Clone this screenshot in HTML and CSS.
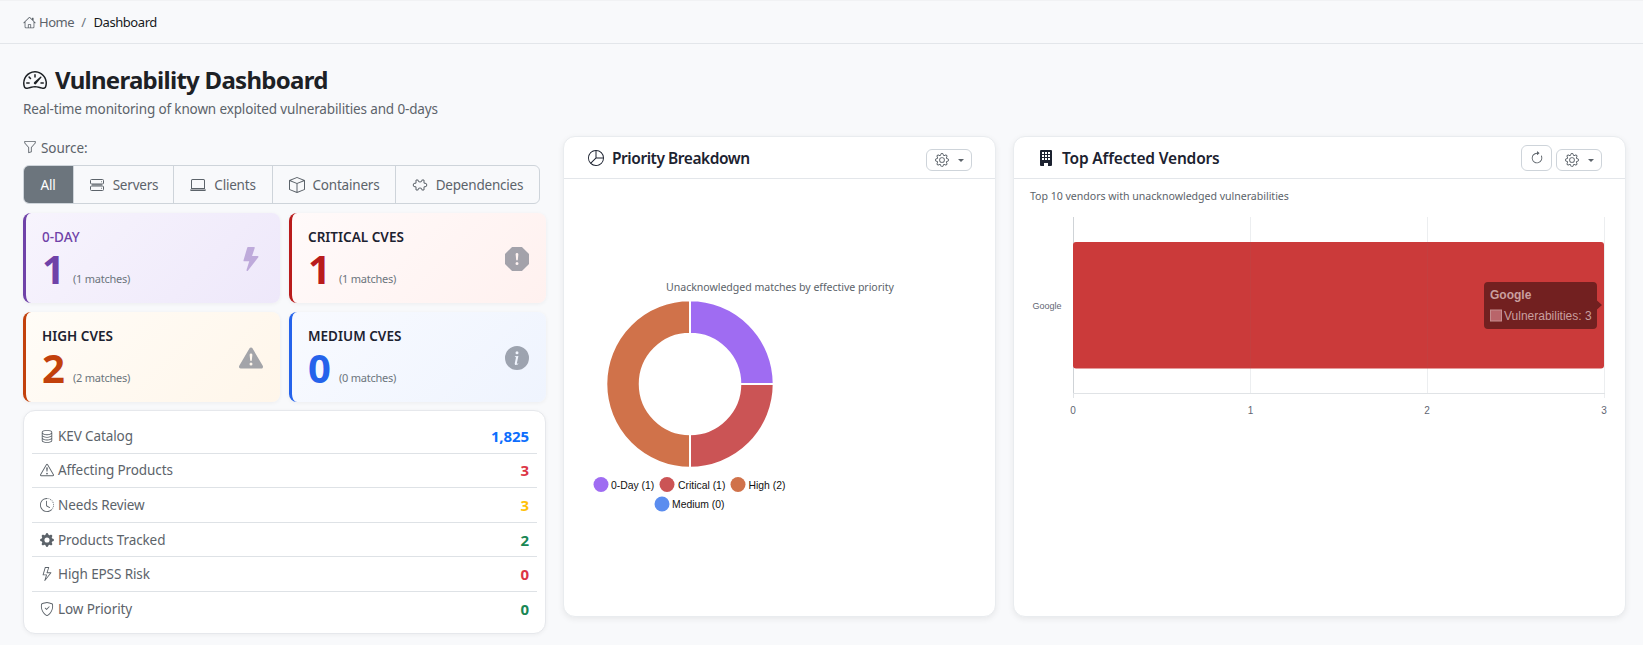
FILE: index.html
```html
<!DOCTYPE html>
<html lang="en">
<head>
<meta charset="utf-8">
<title>Vulnerability Dashboard</title>
<link rel="stylesheet" href="styles.css">
</head>
<body>
<svg class="sprite" width="0" height="0" aria-hidden="true">
  <symbol id="i-house" viewBox="0 0 16 16"><path d="M8.707 1.5a1 1 0 0 0-1.414 0L.646 8.146a.5.5 0 0 0 .708.708L2 8.207V13.5A1.5 1.5 0 0 0 3.5 15h9a1.5 1.5 0 0 0 1.5-1.5V8.207l.646.647a.5.5 0 0 0 .708-.708L13 5.793V2.5a.5.5 0 0 0-.5-.5h-1a.5.5 0 0 0-.5.5v1.293zM13 7.207V13.5a.5.5 0 0 1-.5.5H10v-3.5a.5.5 0 0 0-.5-.5h-3a.5.5 0 0 0-.5.5V14H3.500a.5.5 0 0 1-.5-.5V7.207l5-5zM7 14v-3h2v3z"/></symbol>
  <symbol id="i-speed" viewBox="0 0 16 16"><path d="M8 4a.5.5 0 0 1 .5.5V6a.5.5 0 0 1-1 0V4.500A.5.5 0 0 1 8 4M3.732 5.732a.5.5 0 0 1 .707 0l.915.914a.5.5 0 1 1-.708.708l-.914-.915a.5.5 0 0 1 0-.707M2 10a.5.5 0 0 1 .5-.5h1.586a.5.5 0 0 1 0 1H2.500A.5.5 0 0 1 2 10m9.500 0a.5.5 0 0 1 .5-.5h1.500a.5.5 0 0 1 0 1H12a.5.5 0 0 1-.5-.5m.754-4.246a.39.39 0 0 0-.527-.02L7.547 9.310a.91.91 0 1 0 1.302 1.258l3.434-4.297a.39.39 0 0 0-.029-.518z"/><path fill-rule="evenodd" d="M0 10a8 8 0 1 1 15.547 2.661c-.442 1.253-1.845 1.602-2.932 1.250C11.309 13.488 9.475 13 8 13c-1.474 0-3.310.488-4.615.911-1.087.352-2.490.003-2.932-1.250A8 8 0 0 1 0 10m8-7a7 7 0 0 0-6.603 9.329c.203.575.923.876 1.680.630C4.397 12.533 6.358 12 8 12s3.604.532 4.923.960c.757.245 1.477-.056 1.680-.631A7 7 0 0 0 8 3"/></symbol>
  <symbol id="i-funnel" viewBox="0 0 16 16"><path d="M1.500 1.500A.5.5 0 0 1 2 1h12a.5.5 0 0 1 .5.5v2a.5.5 0 0 1-.128.334L10 8.692V13.500a.5.5 0 0 1-.342.474l-3 1A.5.5 0 0 1 6 14.500V8.692L1.628 3.834A.5.5 0 0 1 1.500 3.500zm1 .5v1.308l4.372 4.858A.5.5 0 0 1 7 8.500v5.306l2-.666V8.500a.5.5 0 0 1 .128-.334L13.500 3.308V2z"/></symbol>
  <symbol id="i-servers" viewBox="0 0 16 16"><g fill="none" stroke="currentColor"><rect x="1.500" y="2.500" width="13" height="4.500" rx="1"/><rect x="1.500" y="9" width="13" height="4.500" rx="1"/><path d="M3 7.900h10M12 4.750h.8M12 11.250h.8"/></g></symbol>
  <symbol id="i-laptop" viewBox="0 0 16 16"><path d="M13.500 3a.5.5 0 0 1 .5.5V11H2V3.500a.5.5 0 0 1 .5-.5zm-11-1A1.500 1.500 0 0 0 1 3.500V12h14V3.500A1.500 1.500 0 0 0 13.500 2zM0 12.500h16a1.500 1.500 0 0 1-1.500 1.500h-13A1.500 1.500 0 0 1 0 12.500"/></symbol>
  <symbol id="i-box" viewBox="0 0 16 16"><path d="M8.186 1.113a.5.5 0 0 0-.372 0L1.846 3.500 8 5.961 14.154 3.500zM15 4.239l-6.500 2.600v7.922l6.500-2.600V4.240zM7.500 14.762V6.838L1 4.239v7.925zM7.443.184a1.500 1.500 0 0 1 1.114 0l7.129 2.852A.5.5 0 0 1 16 3.500v8.662a1 1 0 0 1-.629.928l-7.185 2.874a.5.5 0 0 1-.372 0L.63 13.090a1 1 0 0 1-.63-.928V3.500a.5.5 0 0 1 .314-.464z"/></symbol>
  <symbol id="i-puzzle" viewBox="0 0 16 16"><path fill="none" stroke="currentColor" d="M4 3h2.200v.8a1.800 1.200 0 0 0 3.600 0V3H12v3.200h1a1.800 1.800 0 0 1 0 3.600h-1V13H9.800v-.8a1.800 1.200 0 0 0-3.600 0v.8H4V9.800H3a1.800 1.800 0 0 1 0-3.600h1z"/></symbol>
  <symbol id="i-bolt-fill" viewBox="0 0 16 16"><path d="M5.520.359A.5.5 0 0 1 6 0h4a.5.5 0 0 1 .474.658L8.694 6H12.500a.5.5 0 0 1 .395.807l-7 9a.5.5 0 0 1-.873-.454L6.823 9.500H3.500a.5.5 0 0 1-.48-.641z"/></symbol>
  <symbol id="i-octagon" viewBox="0 0 16 16"><path d="M11.460.146A.5.5 0 0 0 11.107 0H4.893a.5.5 0 0 0-.353.146L.146 4.540A.5.5 0 0 0 0 4.893v6.214a.5.5 0 0 0 .146.353l4.394 4.394a.5.5 0 0 0 .353.146h6.214a.5.5 0 0 0 .353-.146l4.394-4.394a.5.5 0 0 0 .146-.353V4.893a.5.5 0 0 0-.146-.353zM8 4c.535 0 .954.462.9.995l-.35 3.507a.552.552 0 0 1-1.100 0L7.100 4.995A.905.905 0 0 1 8 4m.002 6a1 1 0 1 1 0 2 1 1 0 0 1 0-2"/></symbol>
  <symbol id="i-tri-fill" viewBox="0 0 16 16"><path d="M8.982 1.566a1.130 1.130 0 0 0-1.960 0L.165 13.233c-.457.778.091 1.767.98 1.767h13.713c.889 0 1.438-.99.98-1.767zM8 5c.535 0 .954.462.9.995l-.35 3.507a.552.552 0 0 1-1.100 0L7.100 5.995A.905.905 0 0 1 8 5m.002 6a1 1 0 1 1 0 2 1 1 0 0 1 0-2"/></symbol>
  <symbol id="i-info" viewBox="0 0 16 16"><path d="M8 16A8 8 0 1 0 8 0a8 8 0 0 0 0 16m.93-9.412-1 4.705c-.07.34.029.533.304.533.194 0 .487-.07.686-.246l-.088.416c-.287.346-.92.598-1.465.598-.703 0-1.002-.422-.808-1.319l.738-3.468c.064-.293.006-.399-.287-.47l-.451-.081.082-.381 2.290-.287zM8 5.500a1 1 0 1 1 0-2 1 1 0 0 1 0 2"/></symbol>
  <symbol id="i-db" viewBox="0 0 16 16"><path d="M4.318 2.687C5.234 2.271 6.536 2 8 2s2.766.27 3.682.687C12.644 3.125 13 3.627 13 4c0 .374-.356.875-1.318 1.313C10.766 5.729 9.464 6 8 6s-2.766-.27-3.682-.687C3.356 4.875 3 4.373 3 4c0-.374.356-.875 1.318-1.313M13 5.698V7c0 .374-.356.875-1.318 1.313C10.766 8.729 9.464 9 8 9s-2.766-.27-3.682-.687C3.356 7.875 3 7.373 3 7V5.698c.271.202.58.378.904.525C4.978 6.711 6.427 7 8 7s3.022-.289 4.096-.777A5 5 0 0 0 13 5.698M14 4c0-1.007-.875-1.755-1.904-2.223C11.022 1.289 9.573 1 8 1s-3.022.289-4.096.777C2.875 2.245 2 2.993 2 4v9c0 1.007.875 1.755 1.904 2.223C4.978 15.710 6.427 16 8 16s3.022-.289 4.096-.777C13.125 14.755 14 14.007 14 13zm-1 4.698V10c0 .374-.356.875-1.318 1.313C10.766 11.729 9.464 12 8 12s-2.766-.27-3.682-.687C3.356 10.875 3 10.373 3 10V8.698c.271.202.58.378.904.525C4.978 9.710 6.427 10 8 10s3.022-.289 4.096-.777A5 5 0 0 0 13 8.698m0 3V13c0 .374-.356.875-1.318 1.313C10.766 14.729 9.464 15 8 15s-2.766-.27-3.682-.687C3.356 13.875 3 13.373 3 13v-1.302c.271.202.58.378.904.525C4.978 12.710 6.427 13 8 13s3.022-.289 4.096-.777c.324-.147.633-.323.904-.525"/></symbol>
  <symbol id="i-tri" viewBox="0 0 16 16"><path d="M7.938 2.016A.13.13 0 0 1 8.002 2a.13.13 0 0 1 .063.016.15.15 0 0 1 .054.057l6.857 11.667c.036.06.035.124.002.183a.2.2 0 0 1-.054.06.1.1 0 0 1-.066.017H1.146a.1.1 0 0 1-.066-.017.2.2 0 0 1-.054-.06.18.18 0 0 1 .002-.183L7.884 2.073a.15.15 0 0 1 .054-.057m1.044-.45a1.130 1.130 0 0 0-1.960 0L.165 13.233c-.457.778.091 1.767.98 1.767h13.713c.889 0 1.438-.99.98-1.767z"/><path d="M7.002 12a1 1 0 1 1 2 0 1 1 0 0 1-2 0M7.100 5.995a.905.905 0 1 1 1.800 0l-.35 3.507a.552.552 0 0 1-1.100 0z"/></symbol>
  <symbol id="i-clock" viewBox="0 0 16 16"><path d="M8.515 1.019A7 7 0 0 0 8 1V0a8 8 0 0 1 .589.022zm2.004.45a7 7 0 0 0-.985-.299l.219-.976q.576.129 1.126.342zm1.370.71a7 7 0 0 0-.439-.27l.493-.87a8 8 0 0 1 .979.654l-.615.789a7 7 0 0 0-.418-.302zm1.834 1.790a7 7 0 0 0-.653-.796l.724-.69q.406.429.747.91zm.744 1.352a7 7 0 0 0-.214-.468l.893-.45a8 8 0 0 1 .45 1.088l-.95.313a7 7 0 0 0-.179-.483m.53 2.507a7 7 0 0 0-.1-1.025l.985-.17q.1.580.116 1.170zm-.131 1.538q.05-.254.081-.51l.993.123a8 8 0 0 1-.23 1.155l-.964-.267q.069-.247.120-.501m-.952 2.379q.276-.436.486-.908l.914.405q-.24.540-.555 1.038zm-.964 1.205q.183-.183.350-.378l.758.653a8 8 0 0 1-.401.432z"/><path d="M8 1a7 7 0 1 0 4.950 11.950l.707.707A8.001 8.001 0 1 1 8 0z"/><path d="M7.500 3a.5.5 0 0 1 .5.5v5.210l3.248 1.856a.5.5 0 0 1-.496.868l-3.500-2A.5.5 0 0 1 7 9V3.500a.5.5 0 0 1 .5-.5"/></symbol>
  <symbol id="i-gear-fill" viewBox="0 0 16 16"><path d="M9.405 1.050c-.413-1.400-2.397-1.400-2.810 0l-.1.34a1.464 1.464 0 0 1-2.105.872l-.31-.17c-1.283-.698-2.686.705-1.987 1.987l.169.311c.446.82.023 1.841-.872 2.105l-.34.1c-1.400.413-1.400 2.397 0 2.810l.34.1a1.464 1.464 0 0 1 .872 2.105l-.17.31c-.698 1.283.705 2.686 1.987 1.987l.311-.169a1.464 1.464 0 0 1 2.105.872l.1.34c.413 1.400 2.397 1.400 2.810 0l.1-.34a1.464 1.464 0 0 1 2.105-.872l.31.17c1.283.698 2.686-.705 1.987-1.987l-.169-.311a1.464 1.464 0 0 1 .872-2.105l.34-.1c1.400-.413 1.400-2.397 0-2.810l-.34-.1a1.464 1.464 0 0 1-.872-2.105l.17-.31c.698-1.283-.705-2.686-1.987-1.987l-.311.169a1.464 1.464 0 0 1-2.105-.872zM8 10.930a2.929 2.929 0 1 1 0-5.860 2.929 2.929 0 0 1 0 5.858z"/></symbol>
  <symbol id="i-gear" viewBox="0 0 16 16"><path d="M8 4.754a3.246 3.246 0 1 0 0 6.492 3.246 3.246 0 0 0 0-6.492M5.754 8a2.246 2.246 0 1 1 4.492 0 2.246 2.246 0 0 1-4.492 0"/><path d="M9.796 1.343c-.527-1.790-3.065-1.790-3.592 0l-.094.319a.873.873 0 0 1-1.255.52l-.292-.16c-1.640-.892-3.433.902-2.540 2.541l.159.292a.873.873 0 0 1-.52 1.255l-.319.094c-1.790.527-1.790 3.065 0 3.592l.319.094a.873.873 0 0 1 .52 1.255l-.16.292c-.892 1.640.901 3.434 2.541 2.540l.292-.159a.873.873 0 0 1 1.255.52l.094.319c.527 1.790 3.065 1.790 3.592 0l.094-.319a.873.873 0 0 1 1.255-.52l.292.16c1.640.893 3.434-.902 2.540-2.541l-.159-.292a.873.873 0 0 1 .52-1.255l.319-.094c1.790-.527 1.790-3.065 0-3.592l-.319-.094a.873.873 0 0 1-.52-1.255l.16-.292c.893-1.640-.902-3.433-2.541-2.540l-.292.159a.873.873 0 0 1-1.255-.52zm-2.633.283c.246-.835 1.428-.835 1.674 0l.094.319a1.873 1.873 0 0 0 2.693 1.115l.291-.16c.764-.415 1.600.42 1.184 1.185l-.159.292a1.873 1.873 0 0 0 1.116 2.692l.318.094c.835.246.835 1.428 0 1.674l-.319.094a1.873 1.873 0 0 0-1.115 2.693l.16.291c.415.764-.42 1.600-1.185 1.184l-.291-.159a1.873 1.873 0 0 0-2.693 1.116l-.094.318c-.246.835-1.428.835-1.674 0l-.094-.319a1.873 1.873 0 0 0-2.692-1.115l-.292.16c-.764.415-1.600-.42-1.184-1.185l.159-.291A1.873 1.873 0 0 0 1.945 8.930l-.319-.094c-.835-.246-.835-1.428 0-1.674l.319-.094A1.873 1.873 0 0 0 3.060 4.377l-.16-.292c-.415-.764.42-1.600 1.185-1.184l.292.159a1.873 1.873 0 0 0 2.692-1.115z"/></symbol>
  <symbol id="i-bolt" viewBox="0 0 16 16"><path d="M5.520.359A.5.5 0 0 1 6 0h4a.5.5 0 0 1 .474.658L8.694 6H12.500a.5.5 0 0 1 .395.807l-7 9a.5.5 0 0 1-.873-.454L6.823 9.500H3.500a.5.5 0 0 1-.48-.641zM6.374 1 4.168 8.500H7.500a.5.5 0 0 1 .478.647L6.780 13.040 11.478 7H8a.5.5 0 0 1-.474-.658L9.306 1z"/></symbol>
  <symbol id="i-shield" viewBox="0 0 16 16"><path d="M5.338 1.590a61 61 0 0 0-2.837.856.48.48 0 0 0-.328.39c-.554 4.157.726 7.190 2.253 9.188a10.700 10.700 0 0 0 2.287 2.233c.346.244.652.42.893.533q.18.085.293.118a1 1 0 0 0 .101.025 1 1 0 0 0 .1-.025q.114-.034.294-.118c.24-.113.547-.29.893-.533a10.700 10.700 0 0 0 2.287-2.233c1.527-1.997 2.807-5.031 2.253-9.188a.48.48 0 0 0-.328-.39c-.651-.213-1.750-.56-2.837-.855C9.552 1.290 8.531 1.067 8 1.067c-.53 0-1.552.223-2.662.524zM5.072.56C6.157.265 7.310 0 8 0s1.843.265 2.928.56c1.110.3 2.229.655 2.887.87a1.540 1.540 0 0 1 1.044 1.262c.596 4.477-.787 7.795-2.465 9.990a11.800 11.800 0 0 1-2.517 2.453 7 7 0 0 1-1.048.625c-.28.132-.581.24-.829.24s-.548-.108-.829-.24a7 7 0 0 1-1.048-.625 11.800 11.800 0 0 1-2.517-2.453C1.928 10.487.545 7.169 1.141 2.692A1.540 1.540 0 0 1 2.185 1.430 63 63 0 0 1 5.072.56"/><path d="M10.854 5.146a.5.5 0 0 1 0 .708l-3 3a.5.5 0 0 1-.708 0l-1.500-1.500a.5.5 0 1 1 .708-.708L7.500 7.793l2.646-2.647a.5.5 0 0 1 .708 0"/></symbol>
  <symbol id="i-pie" viewBox="0 0 16 16"><path d="M7.500 1.018a7 7 0 0 0-4.790 11.566L7.500 7.793zm1 0V7.500h6.482A7 7 0 0 0 8.500 1.018M14.982 8.500H8.207l-4.790 4.790A7 7 0 0 0 14.982 8.500M0 8a8 8 0 1 1 16 0A8 8 0 0 1 0 8"/></symbol>
  <symbol id="i-building" viewBox="0 0 16 16"><path fill-rule="evenodd" d="M3 0a1 1 0 0 0-1 1v14a1 1 0 0 0 1 1h3v-3h4v3h3a1 1 0 0 0 1-1V1a1 1 0 0 0-1-1zm1 2h2v2H4zm3 0h2v2H7zm3 0h2v2h-2zM4 5h2v2H4zm3 0h2v2H7zm3 0h2v2h-2zM4 8h2v2H4zm3 0h2v2H7zm3 0h2v2h-2z"/></symbol>
  <symbol id="i-refresh" viewBox="0 0 16 16"><path d="M8 3a5 5 0 1 0 4.546 2.914.5.5 0 0 1 .908-.417A6 6 0 1 1 8 2z"/><path d="M8 4.466V.534a.25.25 0 0 1 .41-.192l2.360 1.966c.12.1.12.284 0 .384L8.410 4.658A.25.25 0 0 1 8 4.466"/></symbol>
</svg>

<nav class="crumbs">
  <a class="crumb-link"><svg class="ico ico-13"><use href="#i-house"/></svg>Home</a>
  <span class="crumb-sep">/</span>
  <span class="crumb-now">Dashboard</span>
</nav>

<main class="page">
  <header class="page-head">
    <h1 class="page-title"><svg class="ico ico-24"><use href="#i-speed"/></svg>Vulnerability Dashboard</h1>
    <p class="page-sub">Real-time monitoring of known exploited vulnerabilities and 0-days</p>
  </header>

  <div class="columns">
    <section class="left">
      <div class="source-label"><svg class="ico ico-14"><use href="#i-funnel"/></svg>Source:</div>
      <div class="btn-group">
        <button class="seg seg-active seg-all">All</button>
        <button class="seg seg-servers"><svg class="ico ico-16"><use href="#i-servers"/></svg>Servers</button>
        <button class="seg seg-clients"><svg class="ico ico-16"><use href="#i-laptop"/></svg>Clients</button>
        <button class="seg seg-containers"><svg class="ico ico-16"><use href="#i-box"/></svg>Containers</button>
        <button class="seg seg-deps"><svg class="ico ico-16"><use href="#i-puzzle"/></svg>Dependencies</button>
      </div>

      <div class="cards">
        <article class="card card-zero">
          <div class="card-text">
            <h3 class="card-label">0-DAY</h3>
            <div class="card-value"><span class="card-num">1</span><span class="card-match">(1 matches)</span></div>
          </div>
          <svg class="card-ico"><use href="#i-bolt-fill"/></svg>
        </article>
        <article class="card card-crit">
          <div class="card-text">
            <h3 class="card-label">CRITICAL CVES</h3>
            <div class="card-value"><span class="card-num">1</span><span class="card-match">(1 matches)</span></div>
          </div>
          <svg class="card-ico"><use href="#i-octagon"/></svg>
        </article>
        <article class="card card-high">
          <div class="card-text">
            <h3 class="card-label">HIGH CVES</h3>
            <div class="card-value"><span class="card-num">2</span><span class="card-match">(2 matches)</span></div>
          </div>
          <svg class="card-ico"><use href="#i-tri-fill"/></svg>
        </article>
        <article class="card card-med">
          <div class="card-text">
            <h3 class="card-label">MEDIUM CVES</h3>
            <div class="card-value"><span class="card-num">0</span><span class="card-match">(0 matches)</span></div>
          </div>
          <svg class="card-ico"><use href="#i-info"/></svg>
        </article>
      </div>

      <ul class="stats">
        <li class="stat"><span class="stat-name"><svg class="ico ico-14"><use href="#i-db"/></svg>KEV Catalog</span><b class="v-blue">1,825</b></li>
        <li class="stat"><span class="stat-name"><svg class="ico ico-14"><use href="#i-tri"/></svg>Affecting Products</span><b class="v-red">3</b></li>
        <li class="stat"><span class="stat-name"><svg class="ico ico-14"><use href="#i-clock"/></svg>Needs Review</span><b class="v-yellow">3</b></li>
        <li class="stat"><span class="stat-name"><svg class="ico ico-14"><use href="#i-gear-fill"/></svg>Products Tracked</span><b class="v-green">2</b></li>
        <li class="stat"><span class="stat-name"><svg class="ico ico-14"><use href="#i-bolt"/></svg>High EPSS Risk</span><b class="v-red">0</b></li>
        <li class="stat"><span class="stat-name"><svg class="ico ico-14"><use href="#i-shield"/></svg>Low Priority</span><b class="v-green">0</b></li>
      </ul>
    </section>

    <section class="panel">
      <header class="panel-head">
        <h2 class="panel-title panel-title-tight"><svg class="ico ico-16"><use href="#i-pie"/></svg>Priority Breakdown</h2>
        <div class="panel-actions">
          <button class="tool tool-gear"><svg class="ico ico-14"><use href="#i-gear"/></svg><span class="caret"></span></button>
        </div>
      </header>
      <svg class="chart" viewBox="564 179 431 436">
        <text class="chart-title" x="780" y="291" text-anchor="middle">Unacknowledged matches by effective priority</text>
        <g stroke="#fff" stroke-width="2">
          <path fill="#9f6cf2" d="M690 300.300A83.700 83.700 0 0 1 773.700 384L740.300 384A50.300 50.300 0 0 0 690 333.700Z"/>
          <path fill="#cb5455" d="M773.700 384A83.700 83.700 0 0 1 690 467.700L690 434.300A50.300 50.300 0 0 0 740.300 384Z"/>
          <path fill="#d0724a" d="M690 467.700A83.700 83.700 0 0 1 690 300.300L690 333.700A50.300 50.300 0 0 0 690 434.300Z"/>
        </g>
        <g class="legend">
          <circle cx="601" cy="484.500" r="7.500" fill="#9f6cf2"/><text x="611" y="488.500">0-Day (1)</text>
          <circle cx="667" cy="484.500" r="7.500" fill="#cb5455"/><text x="678" y="488.500">Critical (1)</text>
          <circle cx="738" cy="484.500" r="7.500" fill="#d0724a"/><text x="748.500" y="488.500">High (2)</text>
          <circle cx="662" cy="504" r="7.500" fill="#5b8def"/><text x="672" y="508">Medium (0)</text>
        </g>
      </svg>
    </section>

    <section class="panel">
      <header class="panel-head">
        <h2 class="panel-title"><svg class="ico ico-16 ico-building"><use href="#i-building"/></svg>Top Affected Vendors</h2>
        <div class="panel-actions">
          <button class="tool tool-refresh"><svg class="ico ico-14"><use href="#i-refresh"/></svg></button>
          <button class="tool tool-gear"><svg class="ico ico-14"><use href="#i-gear"/></svg><span class="caret"></span></button>
        </div>
      </header>
      <svg class="chart" viewBox="1014 179 611 436">
        <text class="chart-title chart-sub" x="1030" y="200">Top 10 vendors with unacknowledged vulnerabilities</text>
        <g class="grid">
          <path d="M1250.500 217V393M1427.500 217V393M1604.500 217V398"/>
        </g>
        <path class="axis-y" d="M1073.500 217V393"/>
        <path class="axis-x" d="M1073 393.500H1605M1073.500 393V398"/>
        <path fill="#cb3a3a" d="M1073 245a3 3 0 0 1 3-3H1601a3 3 0 0 1 3 3V365.500a3 3 0 0 1-3 3H1076a3 3 0 0 1-3-3Z"/>
        <g class="grid grid-over"><path d="M1250.500 242V368M1427.500 242V368"/></g>
        <text class="tick tick-name" x="1047" y="308.500" text-anchor="middle">Google</text>
        <text class="tick" x="1073" y="414" text-anchor="middle">0</text>
        <text class="tick" x="1250.500" y="414" text-anchor="middle">1</text>
        <text class="tick" x="1427" y="414" text-anchor="middle">2</text>
        <text class="tick" x="1604" y="414" text-anchor="middle">3</text>
        <g class="tooltip">
          <path fill="#722020" d="M1488 282H1593a4 4 0 0 1 4 4V300.500L1602 305L1597 309.500V325a4 4 0 0 1-4 4H1488a4 4 0 0 1-4-4V286a4 4 0 0 1 4-4Z"/>
          <text class="tip-head" x="1490" y="299">Google</text>
          <rect x="1490.500" y="310" width="11" height="11" fill="#b9656a" stroke="#c58d8e"/>
          <text class="tip-body" x="1504" y="320">Vulnerabilities: 3</text>
        </g>
      </svg>
    </section>
  </div>
</main>
</body>
</html>
```

FILE: styles.css
```css
* { box-sizing: border-box; }
html, body { margin: 0; height: 645px; overflow: hidden; }
body {
  background: #f8f9fb;
  color: #212529;
  font-family: "Noto Sans", "Open Sans", sans-serif;
}
.sprite { position: absolute; }
.ico { fill: currentColor; flex: none; display: inline-block; }
.ico-13 { width: 13px; height: 13px; }
.ico-14 { width: 14px; height: 14px; }
.ico-16 { width: 16px; height: 16px; }
.ico-24 { width: 24px; height: 24px; }

.crumbs {
  height: 44px;
  padding: 0 23px;
  display: flex;
  align-items: center;
  gap: 7px;
  border-bottom: 1px solid #e3e6ea;
  border-top: 1px solid #f1f2f4;
  font-size: 13px;
  letter-spacing: -.45px;
}
.crumb-link { color: #5c636a; display: flex; align-items: center; gap: 3px; }
.crumb-sep { color: #6c757d; }
.crumb-now { color: #16191c; margin-left: 1px; }

.page { padding: 0 17px 0 23px; }
.page-head { padding-top: 19px; height: 92px; }
.page-title {
  margin: 0;
  display: flex;
  align-items: center;
  gap: 8px;
  height: 33px;
  font-size: 24px;
  font-weight: 700;
  line-height: 33px;
  color: #1d2125;
  letter-spacing: -.72px;
}
.page-sub {
  margin: 3px 0 0;
  font-size: 13.500px;
  line-height: 20px;
  color: #5c636a;
  letter-spacing: -.14px;
}

.columns {
  display: grid;
  grid-template-columns: 523px 433px 613px;
  column-gap: 17px;
  align-items: start;
}

.source-label {
  height: 29px;
  padding-top: 2px;
  display: flex;
  gap: 4px;
  font-size: 13.500px;
  color: #5c636a;
  align-items: flex-start;
  line-height: 20px;
  letter-spacing: -.05px;
}
.source-label .ico { margin-top: 2px; }
.btn-group {
  display: flex;
  width: 517px;
  height: 39px;
  border: 1px solid #ced4da;
  border-radius: 6px;
  overflow: hidden;
}
.seg {
  border: 0;
  border-left: 1px solid #ced4da;
  background: transparent;
  font: inherit;
  font-size: 13.500px;
  color: #5c636a;
  display: flex;
  align-items: center;
  justify-content: center;
  gap: 8px;
  padding: 0;
  letter-spacing: -.2px;
}
.seg-active { background: #6c757d; color: #fff; border-left: 0; }
.seg-all { width: 50px; margin-left: -1px; }
.seg-servers { width: 100px; }
.seg-clients { width: 99px; }
.seg-containers { width: 123px; }
.seg-deps { width: 144px; }

.cards {
  display: grid;
  grid-template-columns: 257px 257px;
  gap: 9px;
  margin-top: 9px;
}
.card {
  height: 90px;
  border-left: 3px solid;
  border-radius: 8px;
  padding: 14px 17px 0 16px;
  display: flex;
  justify-content: space-between;
  box-shadow: 0 1px 4px rgba(0, 0, 0, .05);
}
.card-label {
  margin: 0;
  font-size: 13.500px;
  font-weight: 600;
  line-height: 20px;
  color: #1c2230;
  letter-spacing: .02px;
}
.card-value { display: flex; align-items: baseline; height: 42px; margin-top: 4px; }
.card-num { font-size: 40px; line-height: 36px; font-weight: 700; width: 31px; }
.card-match { font-size: 11px; color: #6c757d; letter-spacing: -.25px; transform: translateY(-1px); }
.card-ico { width: 24px; height: 24px; margin-top: 20px; fill: #6b7280; opacity: .62; }
.card-zero { border-color: #6f42a8; background: linear-gradient(135deg, #f7f4fd, #eee8fa); }
.card-zero .card-label, .card-zero .card-num { color: #6f42a8; }
.card-zero .card-label { font-weight: 500; }
.card-zero .card-ico { fill: #6f42a8; opacity: .38; }
.card-crit { border-color: #b91c1c; background: linear-gradient(135deg, #fffafa, #fff1ef); }
.card-crit .card-num { color: #b91c1c; }
.card-high { border-color: #c2410c; background: linear-gradient(135deg, #fffcf7, #fff6ea); }
.card-high .card-num { color: #c2410c; }
.card-med { border-color: #2563eb; background: linear-gradient(135deg, #f8faff, #eff4fe); }
.card-med .card-num { color: #2563eb; }

.stats {
  list-style: none;
  margin: 8px 0 0;
  padding: 8px;
  height: 224px;
  background: #fff;
  border: 1px solid #e6e8ec;
  border-radius: 12px;
  box-shadow: 0 1px 4px rgba(0, 0, 0, .05);
}
.stat {
  height: 34.600px;
  padding: 0 8px 0 8px;
  display: flex;
  align-items: center;
  justify-content: space-between;
  border-bottom: 1px solid #dee2e6;
  font-size: 13.500px;
  letter-spacing: -.1px;
}
.stat:last-child { border-bottom: 0; }
.stat-name { display: flex; align-items: center; gap: 4px; color: #5c636a; }
.stat b { font-size: 15px; font-weight: 700; }
.v-blue { color: #0d6efd; }
.v-red { color: #dc3545; }
.v-yellow { color: #ffc107; }
.v-green { color: #198754; }

.panel {
  height: 481px;
  background: #fff;
  border: 1px solid #e9ecef;
  border-radius: 12px;
  box-shadow: 0 2px 6px rgba(0, 0, 0, .07);
  overflow: hidden;
}
.panel-head {
  height: 42px;
  padding: 0 23px 0 24px;
  display: flex;
  align-items: center;
  justify-content: space-between;
  border-bottom: 1px solid #e3e6ea;
}
.panel-title {
  margin: 0;
  display: flex;
  align-items: center;
  gap: 8px;
  font-size: 15.500px;
  font-weight: 600;
  color: #1c2230;
  letter-spacing: -.17px;
}
.panel-title-tight { letter-spacing: -.45px; }
.panel-actions { display: flex; align-items: flex-end; gap: 4px; height: 26px; margin-top: 1px; }
.tool {
  background: #fff;
  border: 1px solid #ced4da;
  border-radius: 6px;
  padding: 0;
  color: #5c636a;
  display: flex;
  align-items: center;
  justify-content: center;
}
.tool-gear { width: 46px; height: 22px; gap: 9px; }
.tool-refresh { width: 31px; height: 26px; }
.caret {
  width: 0;
  height: 0;
  border: 3.500px solid transparent;
  border-top-color: #5c636a;
  border-bottom: 0;
}
.chart { display: block; width: 100%; height: 436px; }
.chart-title { font-size: 10.600px; fill: #5c636a; letter-spacing: -.05px; }
.chart-sub { letter-spacing: -.03px; }
.legend text { font-family: "Liberation Sans", Arial, sans-serif; font-size: 10.400px; fill: #111; }
.grid path { stroke: #eceef0; fill: none; }
.grid-over path { stroke: #c43f3f; }
.axis-y { stroke: #cfd3d7; fill: none; }
.axis-x { stroke: #e0e3e6; fill: none; }
.tick { font-family: "Liberation Sans", Arial, sans-serif; font-size: 10px; fill: #5f6673; }
.tick-name { font-size: 9px; }
.tip-head { font-family: "Liberation Sans", Arial, sans-serif; font-size: 12px; font-weight: 700; fill: #c99f9f; }
.tip-body { font-family: "Liberation Sans", Arial, sans-serif; font-size: 12px; fill: #c99f9f; }
```
